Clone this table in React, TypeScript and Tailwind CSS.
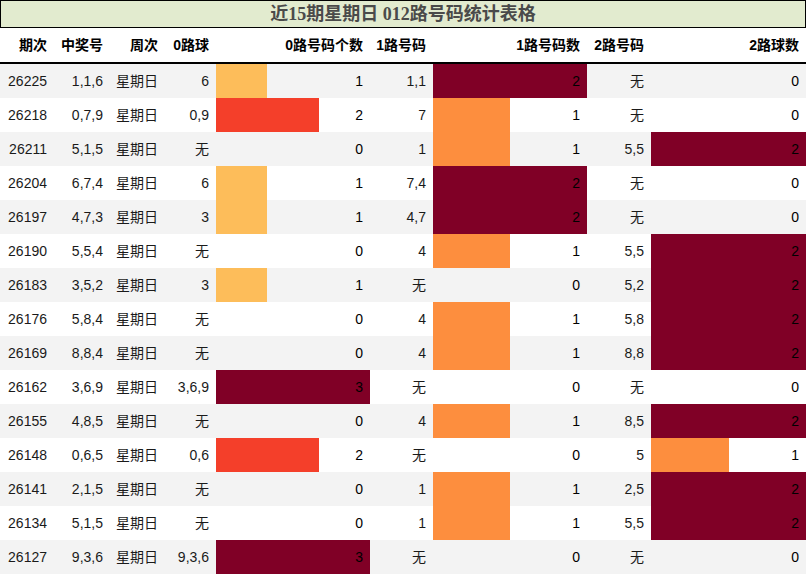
import React from 'react';

type Row = {
  qi: string;
  num: string;
  zero: string;
  zeroCnt: number;
  one: string;
  oneCnt: number;
  two: string;
  twoCnt: number;
};

const rows: Row[] = [
  { qi: '26225', num: '1,1,6', zero: '6', zeroCnt: 1, one: '1,1', oneCnt: 2, two: '无', twoCnt: 0 },
  { qi: '26218', num: '0,7,9', zero: '0,9', zeroCnt: 2, one: '7', oneCnt: 1, two: '无', twoCnt: 0 },
  { qi: '26211', num: '5,1,5', zero: '无', zeroCnt: 0, one: '1', oneCnt: 1, two: '5,5', twoCnt: 2 },
  { qi: '26204', num: '6,7,4', zero: '6', zeroCnt: 1, one: '7,4', oneCnt: 2, two: '无', twoCnt: 0 },
  { qi: '26197', num: '4,7,3', zero: '3', zeroCnt: 1, one: '4,7', oneCnt: 2, two: '无', twoCnt: 0 },
  { qi: '26190', num: '5,5,4', zero: '无', zeroCnt: 0, one: '4', oneCnt: 1, two: '5,5', twoCnt: 2 },
  { qi: '26183', num: '3,5,2', zero: '3', zeroCnt: 1, one: '无', oneCnt: 0, two: '5,2', twoCnt: 2 },
  { qi: '26176', num: '5,8,4', zero: '无', zeroCnt: 0, one: '4', oneCnt: 1, two: '5,8', twoCnt: 2 },
  { qi: '26169', num: '8,8,4', zero: '无', zeroCnt: 0, one: '4', oneCnt: 1, two: '8,8', twoCnt: 2 },
  { qi: '26162', num: '3,6,9', zero: '3,6,9', zeroCnt: 3, one: '无', oneCnt: 0, two: '无', twoCnt: 0 },
  { qi: '26155', num: '4,8,5', zero: '无', zeroCnt: 0, one: '4', oneCnt: 1, two: '8,5', twoCnt: 2 },
  { qi: '26148', num: '0,6,5', zero: '0,6', zeroCnt: 2, one: '无', oneCnt: 0, two: '5', twoCnt: 1 },
  { qi: '26141', num: '2,1,5', zero: '无', zeroCnt: 0, one: '1', oneCnt: 1, two: '2,5', twoCnt: 2 },
  { qi: '26134', num: '5,1,5', zero: '无', zeroCnt: 0, one: '1', oneCnt: 1, two: '5,5', twoCnt: 2 },
  { qi: '26127', num: '9,3,6', zero: '9,3,6', zeroCnt: 3, one: '无', oneCnt: 0, two: '无', twoCnt: 0 },
];

const zeroColors = ['', 'bg-[#fdbd5a]', 'bg-[#f43f2a]', 'bg-[#800026]'];
const halfColors = ['', 'bg-[#fd8e3e]', 'bg-[#800026]'];

const cols = 'grid grid-cols-[54px_56px_55px_51px_154px_63px_154px_64px_155px]';
const font = { fontFamily: '"Liberation Sans", "Noto Sans CJK SC", sans-serif' };

function BarCell({ value, max, color }: { value: number; max: number; color: string }) {
  return (
    <div className="relative flex items-center justify-end pr-[7px]">
      {value > 0 && (
        <div className={`absolute left-0 top-0 bottom-0 ${color}`} style={{ width: `${(value / max) * 100}%` }} />
      )}
      <span className="relative text-black">{value}</span>
    </div>
  );
}

export default function App() {
  return (
    <div className="w-[806px] bg-white text-[14px] text-[#1a1a1a]" style={font}>
      <div
        className="h-[28px] border border-black bg-[#e2ebcf] flex items-center justify-center text-[18px] font-bold text-[#4a4a4a]"
        style={{ fontFamily: '"Liberation Serif", "Noto Sans CJK SC", serif' }}
      >
        近15期星期日 012路号码统计表格
      </div>
      <div className={`${cols} h-[36px] border-b-2 border-black font-bold text-black`}>
        {['期次', '中奖号', '周次', '0路球', '0路号码个数', '1路号码', '1路号码数', '2路号码', '2路球数'].map((h) => (
          <div key={h} className="flex items-center justify-end pr-[7px]">
            {h}
          </div>
        ))}
      </div>
      {rows.map((r, i) => (
        <div key={r.qi} className={`${cols} h-[34px] ${i % 2 === 0 ? 'bg-[#f3f3f3]' : 'bg-white'}`}>
          <div className="flex items-center justify-end pr-[7px]">{r.qi}</div>
          <div className="flex items-center justify-end pr-[7px]">{r.num}</div>
          <div className="flex items-center justify-end pr-[7px]">星期日</div>
          <div className="flex items-center justify-end pr-[7px]">{r.zero}</div>
          <BarCell value={r.zeroCnt} max={3} color={zeroColors[r.zeroCnt]} />
          <div className="flex items-center justify-end pr-[7px]">{r.one}</div>
          <BarCell value={r.oneCnt} max={2} color={halfColors[r.oneCnt]} />
          <div className="flex items-center justify-end pr-[7px]">{r.two}</div>
          <BarCell value={r.twoCnt} max={2} color={halfColors[r.twoCnt]} />
        </div>
      ))}
    </div>
  );
}
